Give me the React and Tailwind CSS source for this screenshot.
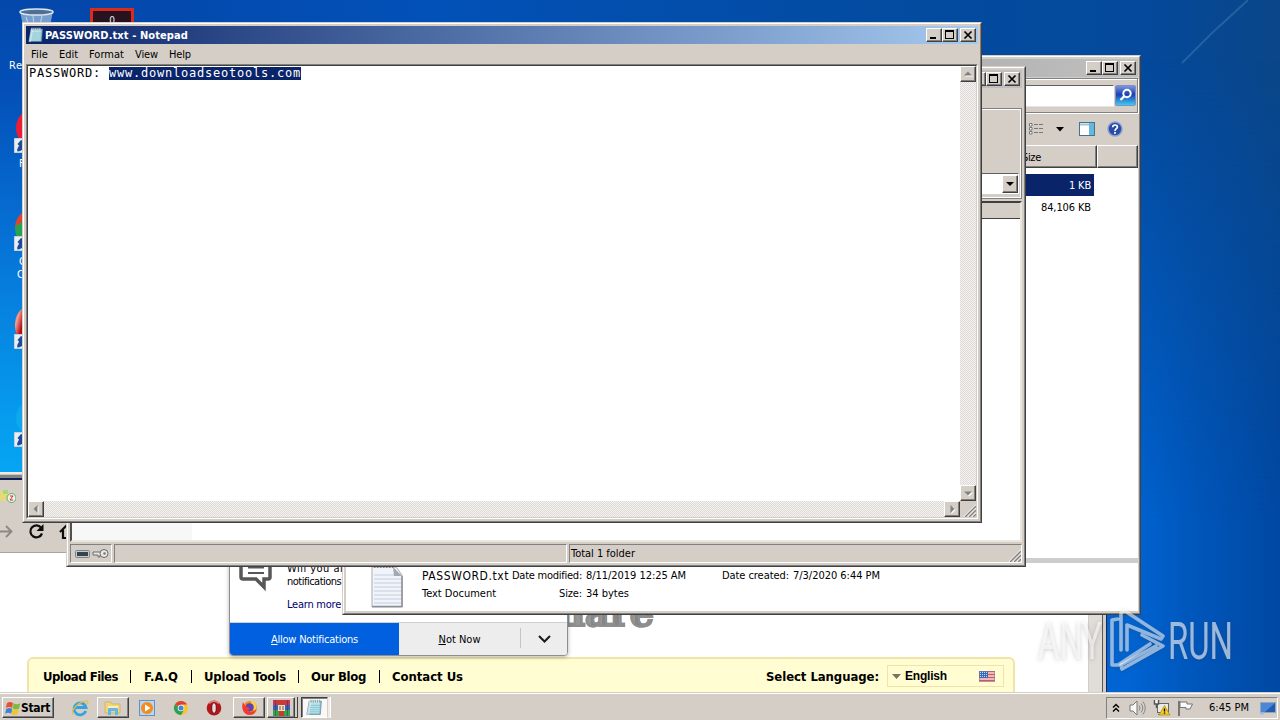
import React, { useLayoutEffect, useRef } from "react";

const UI = "font-['DejaVu_Sans_Condensed','DejaVu_Sans',sans-serif] ";

/* One line of text, tracked so that it fills the given width. */
function T({ w, className = "", children }) {
  const ref = useRef(null);
  useLayoutEffect(() => {
    const el = ref.current;
    el.style.letterSpacing = "0px";
    const n = el.textContent.length;
    el.style.letterSpacing = (w - el.getBoundingClientRect().width) / n + "px";
  }, [w]);
  return (
    <span ref={ref} className={"inline-block shrink-0 whitespace-pre " + className}>
      {children}
    </span>
  );
}

const RAISED =
  "border border-t-white border-l-white border-r-[#404040] border-b-[#404040] shadow-[inset_-1px_-1px_0_#808080] bg-[#d5cec7] ";

function Win({ className, pad = "p-[2px]", children }) {
  return (
    <div className={"absolute border border-t-[#d4d0c8] border-l-[#d4d0c8] border-r-[#404040] border-b-[#404040] " + className}>
      <div className={"flex h-full w-full flex-col border border-t-white border-l-white border-r-[#808080] border-b-[#808080] bg-[#d5cec7] " + pad}>
        {children}
      </div>
    </div>
  );
}

function Caption() {
  return (
    <div className="flex shrink-0 pt-[2px] pr-[2px]">
      <div className={RAISED + "h-[14px] w-4"}>
        <svg className="block" width="14" height="12"><rect x="3" y="8" width="6" height="2" fill="#000" /></svg>
      </div>
      <div className={RAISED + "h-[14px] w-4"}>
        <svg className="block" width="14" height="12"><path d="M2 1h9v9H2zM3 3v6h7V3z" fillRule="evenodd" fill="#000" /></svg>
      </div>
      <div className={RAISED + "ml-[2px] h-[14px] w-4"}>
        <svg className="block" width="14" height="12"><path d="M3.500 2.500l7 7M10.500 2.500l-7 7" stroke="#000" strokeWidth="1.700" /></svg>
      </div>
    </div>
  );
}

function ScrollBtn({ d }) {
  return (
    <div className={RAISED + "h-4 w-4 shrink-0"}>
      <svg className="block" width="14" height="14">
        <path d={d} fill="#fff" transform="translate(1 1)" />
        <path d={d} fill="#808080" />
      </svg>
    </div>
  );
}

const DITHER = "bg-[#e9e7e3] bg-[conic-gradient(#f4f3f1_25%,#dedad5_0_50%,#f4f3f1_0_75%,#dedad5_0)] bg-[length:2px_2px] ";

function Grip() {
  return (
    <svg className="block" width="13" height="13">
      <path d="M1 13L13 1M5 13L13 5M9 13L13 9" stroke="#fff" strokeWidth="1.200" />
      <path d="M2 13L13 2M6 13L13 6M10 13L13 10" stroke="#808080" strokeWidth="1.300" />
    </svg>
  );
}

function NotepadIcon({ size = 16 }) {
  return (
    <svg className="block shrink-0" width={size} height={size} viewBox="0 0 16 16">
      <path d="M3 2h11.500l-1 12.500H.8z" fill="#8fc3cf" stroke="#4f7f90" strokeWidth=".6" />
      <path d="M4 3.500h9l-.8 10H2.500z" fill="#b5e3ea" />
      <path d="M4 6h9M3.700 8h9M3.400 10h9M3 12h9" stroke="#7db6c4" strokeWidth=".6" />
      <path d="M4 .7v2.500M6 .7v2.500M8 .7v2.500M10 .7v2.500M12 .7v2.500" stroke="#e8f0f2" strokeWidth="1.100" />
      <path d="M4.600 .7v2M6.600 .7v2M8.600 .7v2M10.600 .7v2M12.600 .7v2" stroke="#5b6a70" strokeWidth=".5" />
      <path d="M3 2L.8 14.500l2 .8L5 3z" fill="#e8f2f4" opacity=".6" />
    </svg>
  );
}

function Shortcut({ className }) {
  return (
    <svg className={"absolute left-[14px] " + className} width="15" height="15" viewBox="0 0 15 15">
      <rect width="15" height="15" fill="#e9eef3" stroke="#9fb4c8" />
      <path d="M3.500 13.500c-1-3 1-4 1.500-6L3.500 6l3.500-4 6 3-3 1.500c.5 4-1.500 6.500-6.500 7z" fill="#1c4b9c" />
    </svg>
  );
}

function ChromeIcon({ s }) {
  return (
    <svg className="block" width={s} height={s} viewBox="0 0 16 16">
      <circle cx="8" cy="8" r="7" fill="#f7c52b" />
      <path d="M8 8L1.900 4.500A7 7 0 0 1 14.100 4.500H8z" fill="#de4032" />
      <path d="M8 8L1.900 4.500A7 7 0 0 0 8 15l3-5z" fill="#2da152" />
      <circle cx="8" cy="8" r="3.300" fill="#f4f4f0" />
      <circle cx="8" cy="8" r="2.500" fill="#4285d8" />
    </svg>
  );
}

function Desktop() {
  return (
    <>
      <div className="absolute inset-0 bg-[linear-gradient(180deg,#0447aa_0px,#0350b8_90px,#0672d6_240px,#069cee_420px,#06a6f4_480px)]" />
      <div className="absolute inset-y-0 left-[80px] right-0 bg-[linear-gradient(90deg,#0447aa_0px,#0251b8_350px,#034b9f_840px,#04499c_1060px,#0a4688_1200px)]" />
      <div className="absolute bottom-0 left-[1040px] right-0 top-[60px] bg-[linear-gradient(90deg,#0064d2_90px,#0055b9_160px,#0048a2_240px)] [mask-image:linear-gradient(180deg,transparent_0px,black_460px)]" />
      <svg className="absolute right-0 top-0" width="120" height="80">
        <path d="M88 0L52 33L22 63" stroke="#5d8fbd" strokeWidth="2" opacity=".35" fill="none" />
      </svg>
      <svg className="absolute left-[18px] top-[8px]" width="38" height="18">
        <path d="M2 3h33l-3 15H5z" fill="#9dbbd8" opacity=".75" />
        <ellipse cx="18.500" cy="4" rx="16.500" ry="3" fill="#4f6f96" stroke="#dbe6ee" strokeWidth="1.500" />
        <path d="M8 9l3 9M15 8l1 9M24 8l-2 9" stroke="#dceaf5" strokeWidth="1.200" opacity=".6" />
      </svg>
      <div className={UI + "absolute left-[90px] top-[8px] h-[24px] w-[44px] border-[3px] border-[#dc2a1c] bg-[#26131f] text-center text-[10px] leading-[20px] text-[#eee]"}>0</div>
      <div className={UI + "absolute left-[9px] top-[60px] text-[11px] leading-3 text-white"}><T w={64}>Recycle Bin</T></div>
      <div className="absolute left-[16px] top-[108px] h-[40px] w-[40px] rounded-full bg-[#ee1c34]" />
      <Shortcut className="top-[138px]" />
      <div className={UI + "absolute left-[19px] top-[158px] text-[11px] leading-3 text-white"}>F</div>
      <div className="absolute left-[15px] top-[208px] h-[40px] w-[40px] rounded-full bg-[linear-gradient(150deg,#e0442e_28%,#2ba24e_30%)]" />
      <Shortcut className="top-[236px]" />
      <div className={UI + "absolute left-[19px] top-[256px] text-[11px] leading-3 text-white"}>G</div>
      <div className={UI + "absolute left-[17px] top-[269px] text-[11px] leading-3 text-white"}>C</div>
      <div className="absolute left-[15px] top-[304px] h-[42px] w-[40px] rounded-full bg-[linear-gradient(105deg,#d8281e_0%,#f3a096_12%,#b80c10_25%)]" />
      <Shortcut className="top-[334px]" />
      <div className="absolute left-[16px] top-[400px] h-[36px] w-[36px] rounded-full bg-[#13b0ee] opacity-60" />
      <Shortcut className="top-[432px]" />
    </>
  );
}

function Browser() {
  return (
    <div className="absolute left-0 top-[472px] flex h-[221px] w-[1107px] flex-col overflow-hidden border-r border-[#10285c] bg-white">
      <div className="h-[2px] shrink-0 bg-[#eceae6]" />
      <div className="h-px shrink-0 bg-[#cbc6bf]" />
      <div className="h-[3px] shrink-0 bg-[#858380]" />
      <div className="h-[2px] shrink-0 bg-[#0c1f58]" />
      <div className="flex h-[73px] shrink-0 flex-col border-b border-[#aaa5a0] bg-[#d5cec7]">
        <svg className="mt-[9px] block shrink-0" width="16" height="16">
          <path d="M0 2h6l2 2h6v8H0z" fill="#e7d87b" />
          <path d="M3 1h5v4H3z" fill="#a6d67b" />
          <circle cx="11.500" cy="9" r="4.500" fill="#f2efeb" stroke="#52ad76" />
          <path d="M10 7h3l-3 4h3" stroke="#cb3028" fill="none" />
        </svg>
        <svg className="mt-[16px] block shrink-0" width="80" height="22">
          <path d="M0 10.500h11M6 5l5.500 5.500L6 16" stroke="#8b8783" strokeWidth="1.800" fill="none" />
          <path d="M41 6.500A6 6 0 1 0 42 12.500" stroke="#0c0c0d" strokeWidth="2.200" fill="none" />
          <path d="M43.500 3v7h-7z" fill="#0c0c0d" />
          <path d="M60 11l7-7 7 7M63 9v8h9V9" stroke="#0c0c0d" strokeWidth="2.200" fill="none" />
        </svg>
      </div>
      <div className="flex min-h-0 grow">
        <div className="relative grow overflow-hidden">
          <div className="absolute left-[536px] top-[38px] bg-[repeating-linear-gradient(90deg,#858585_0_6px,#969696_6px_11px)] bg-clip-text font-['DejaVu_Serif',serif] text-[38px] font-black leading-[44px] text-transparent [-webkit-text-stroke:2px_#8e8e8e]">
            <T w={118}>share</T>
          </div>
          <div className="mt-[104px] flex px-[27px]">
            <div className={UI + "flex h-[50px] w-[988px] items-start rounded-t-[6px] border-2 border-[#f1e4a9] bg-[#fffdd1] pl-[14px] text-[13px] font-bold leading-[16px] text-black"}>
              <div className="flex pt-[10px]">
                <T w={75}>Upload Files</T>
                <div className="ml-[12px] mt-px h-[13px] w-px bg-black" />
                <T w={34} className="ml-[13px]">F.A.Q</T>
                <div className="ml-[13px] mt-px h-[13px] w-px bg-black" />
                <T w={82} className="ml-[12px]">Upload Tools</T>
                <div className="ml-[12px] mt-px h-[13px] w-px bg-black" />
                <T w={55} className="ml-[12px]">Our Blog</T>
                <div className="ml-[13px] mt-px h-[13px] w-px bg-black" />
                <T w={71} className="ml-[12px]">Contact Us</T>
              </div>
              <T w={113} className="ml-[303px] mt-[10px]">Select Language:</T>
              <div className="ml-[8px] mt-[6px] flex h-[22px] w-[117px] items-center border border-[#f1e4a9] pl-[4px]">
                <svg width="9" height="5"><path d="M0 0h9L4.500 5z" fill="#77755f" /></svg>
                <span className="ml-[4px] font-['Liberation_Sans',sans-serif] text-[12px]"><T w={42}>English</T></span>
                <svg className="ml-[32px]" width="16" height="11">
                  <rect width="16" height="11" fill="#f3dcd8" />
                  <path d="M0 .5h16M0 3.500h16M0 6.500h16M0 9.500h16" stroke="#d0575a" strokeWidth="1.300" />
                  <rect width="9" height="7" fill="#3667b8" />
                  <path d="M1 1.500h7M1 3.500h7M1 5.500h7" stroke="#c6d7ee" strokeDasharray="1 1" />
                  <rect x=".5" y=".5" width="15" height="10" fill="none" stroke="#8d7894" strokeOpacity=".6" />
                </svg>
              </div>
            </div>
          </div>
        </div>
        <div className="w-[14px] shrink-0 border-l border-[#d2cec9] bg-[#e0dcd8]" />
        <div className="w-px shrink-0 bg-[#5a5754]" />
        <div className="w-[3px] shrink-0 bg-[#d5cec7]" />
      </div>
    </div>
  );
}

function Popup() {
  return (
    <div className={UI + "absolute left-[229px] top-[540px] flex h-[116px] w-[339px] flex-col overflow-hidden rounded-b-[4px] border border-[#8e8e8e] bg-white text-[11px] leading-[13px] shadow-[0_1px_4px_rgba(0,0,0,.3)]"}>
      <div className="flex grow">
        <svg className="ml-[9px] mt-[9px] block shrink-0" width="34" height="42">
          <path d="M4 3h25q2 0 2 2v22q0 2-2 2h-4v8l-8-8H4q-2 0-2-2V5q0-2 2-2z" fill="#fff" stroke="#58585a" strokeWidth="3.500" />
          <path d="M9 12h16M9 17.500h16M9 23h16" stroke="#58585a" strokeWidth="2" />
        </svg>
        <div className="ml-[14px] flex flex-col items-start pt-[21px]">
          <T w={165}>Will you allow this site to send</T>
          <T w={59}>notifications?</T>
          <T w={54} className="mt-[10px] text-[#000070]">Learn more</T>
        </div>
      </div>
      <div className="flex h-[33px] shrink-0 border-t border-[#cfcfcf] bg-[#ededed]">
        <div className="flex w-[169px] justify-center bg-[#0060df] pt-[10px] text-white">
          <T w={87}><u>A</u>llow Notifications</T>
        </div>
        <div className="flex w-[121px] justify-center pt-[10px] text-black"><T w={42}><u>N</u>ot Now</T></div>
        <div className="mt-[5px] h-[20px] w-px bg-[#c4c4c4]" />
        <svg className="ml-[16px] mt-[10px]" width="15" height="12"><path d="M2 3l5.500 5.500L13 3" fill="none" stroke="#1a1a1a" strokeWidth="2" /></svg>
      </div>
    </div>
  );
}

function Explorer() {
  return (
    <Win className="left-[342px] top-[55px] h-[560px] w-[799px]" pad="py-[2px] pl-[2px] pr-px">
      <div className="flex h-[18px] shrink-0 justify-end bg-[linear-gradient(90deg,#808080,#c0c0c0)]"><Caption /></div>
      <div className="mt-px flex h-[35px] shrink-0 justify-end border border-[#808080] pt-[6px] pr-px shadow-[inset_1px_1px_0_#fff,1px_1px_0_#fff]">
        <div className="h-[22px] w-[300px] border border-t-[#606060] border-l-[#606060] border-r-white border-b-[#e8e5e0] bg-white" />
        <svg className="ml-px block" width="21" height="21">
          <defs><linearGradient id="sg" x1="0" y1="0" x2="0" y2="1"><stop offset="0" stopColor="#7f9be0" /><stop offset=".45" stopColor="#1d3fb4" /><stop offset="1" stopColor="#3fd2f4" /></linearGradient></defs>
          <rect x=".5" y=".5" width="20" height="20" rx="1.500" fill="url(#sg)" stroke="#8090c4" />
          <circle cx="12" cy="8.500" r="3.700" fill="none" stroke="#fff" strokeWidth="2" />
          <path d="M9.500 11l-4 4" stroke="#fff" strokeWidth="2.400" />
        </svg>
      </div>
      <div className="flex h-[32px] shrink-0 items-center justify-end pr-[15px]">
        <svg className="block" width="16" height="14">
          <path d="M1.500 1.500h2.500v2.500H1.500zM1.500 5.500h2.500v2.500H1.500zM1.500 9.500h2.500v2.500H1.500z" fill="#fff" stroke="#777" />
          <path d="M6 2.500h9M6 6.500h9M6 10.500h9" stroke="#777" strokeDasharray="4 1" />
        </svg>
        <svg className="ml-[12px] block" width="8" height="5"><path d="M0 0h8L4 4.500z" fill="#000" /></svg>
        <svg className="ml-[15px] block" width="16" height="14">
          <rect x=".5" y=".5" width="15" height="13" fill="#fff" stroke="#4a7186" />
          <path d="M1 2.500h14" stroke="#9dc6d8" strokeWidth="2" />
          <rect x="10" y="1" width="5" height="12" fill="#63b9dd" />
        </svg>
        <svg className="ml-[12px] block" width="16" height="16">
          <circle cx="8" cy="8" r="7" fill="#294ca6" stroke="#8ba1d0" strokeWidth="1.500" />
          <path d="M5.700 6.300c0-3 4.800-3 4.700-.3C10.400 7.700 8 7.800 8 10" stroke="#fff" strokeWidth="1.700" fill="none" />
          <rect x="7.100" y="11" width="1.800" height="1.800" fill="#fff" />
        </svg>
      </div>
      <div className={UI + "flex h-[23px] shrink-0 text-[11px] leading-[13px]"}>
        <div className={RAISED + "w-[751px] pl-[675px] pt-[5px]"}><T w={19}>Size</T></div>
        <div className={RAISED + "grow"} />
      </div>
      <div className={UI + "flex grow flex-col bg-white pt-[6px] text-[11px] leading-[24px]"}>
        <div className="flex h-[22px] w-[748px] justify-end bg-[#0a246a] pr-[3px] text-white"><T w={22}>1 KB</T></div>
        <div className="flex h-[22px] w-[748px] justify-end pr-[3px]"><T w={50}>84,106 KB</T></div>
      </div>
      <div className="h-[5px] shrink-0 bg-[#cdcdcb]" />
      <div className={UI + "flex h-[48px] shrink-0 bg-white pl-[25px] text-[11px] leading-[14px]"}>
        <svg className="block shrink-0" width="32" height="46" viewBox="0 0 32 46">
          <path d="M1 4h24l6 8v32H1z" fill="#f1f4f9" stroke="#a9adb5" />
          <path d="M3 12h27M3 16h27M3 20h27M3 24h27M3 28h27M3 32h27M3 36h27M3 40h27" stroke="#c3cde0" />
          <path d="M22 4l9 9h-8z" fill="#a4a9b0" />
          <path d="M3 4h20" stroke="#888" strokeWidth="2" strokeDasharray="1.500 1.500" />
          <path d="M1 43.500h30V13" stroke="#8d9097" fill="none" strokeWidth="1.500" />
        </svg>
        <div className="ml-[19px] flex flex-col pt-[6px]">
          <div className="flex h-[18px]">
            <T w={87} className="text-[12px]">PASSWORD.txt</T>
            <T w={70} className="ml-[3px]">Date modified:</T>
            <T w={100} className="ml-[4px]">8/11/2019 12:25 AM</T>
            <T w={67} className="ml-[36px]">Date created:</T>
            <T w={87} className="ml-[4px]">7/3/2020 6:44 PM</T>
          </div>
          <div className="flex h-[18px]">
            <T w={74}>Text Document</T>
            <T w={23} className="ml-[63px]">Size:</T>
            <T w={43} className="ml-[4px]">34 bytes</T>
          </div>
        </div>
      </div>
    </Win>
  );
}

const SUNK = "border border-t-[#808080] border-l-[#808080] border-r-white border-b-white ";

function Archive() {
  return (
    <Win className="left-[66px] top-[66px] h-[501px] w-[960px]">
      <div className="flex h-[18px] shrink-0 justify-end bg-[linear-gradient(90deg,#808080,#c0c0c0)]"><Caption /></div>
      <div className="h-[20px] shrink-0" />
      <div className="flex h-[91px] shrink-0 flex-col justify-end border border-[#808080] shadow-[inset_1px_1px_0_#fff,inset_-1px_-1px_0_#fff]">
        <div className="mb-[4px] mr-[2px] flex h-[21px] border border-t-[#606060] border-l-[#606060] border-r-white border-b-white bg-white">
          <div className="grow" />
          <div className={RAISED + "mt-px flex h-[18px] w-[16px] items-center justify-center"}>
            <svg width="8" height="4"><path d="M0 0h8L4 4z" fill="#000" /></svg>
          </div>
        </div>
      </div>
      <div className="mt-[2px] flex grow flex-col border-2 border-t-[#404040] border-l-[#505050] border-r-[#e9e6e0] border-b-[#e9e6e0] bg-white">
        <div className="h-[16px] shrink-0 border-b border-[#404040] bg-[#d5cec7]" />
        <div className="w-[120px] grow bg-[#f7f7f7]" />
      </div>
      <div className={UI + "mt-[2px] flex h-[19px] shrink-0 gap-[2px] text-[11px] leading-[18px]"}>
        <div className={SUNK + "flex w-[42px] items-center gap-[2px] pl-[4px]"}>
          <svg width="15" height="8"><rect x=".5" y=".5" width="14" height="7" rx="1" fill="#c3c9ce" stroke="#7b858c" /><rect x="2" y="2" width="11" height="4" fill="#37424b" /></svg>
          <svg width="17" height="11"><path d="M1 4h9v3H8v2H6V7H1z" fill="#e9e9e9" stroke="#6a6a6a" /><circle cx="12" cy="5.500" r="4" fill="#e9e9e9" stroke="#6a6a6a" /><circle cx="12.500" cy="5.500" r="1.300" fill="#777" /></svg>
        </div>
        <div className={SUNK + "w-[453px]"} />
        <div className={SUNK + "flex grow justify-between pl-px"}>
          <T w={64}>Total 1 folder</T>
          <div className="pt-[4px]"><Grip /></div>
        </div>
      </div>
    </Win>
  );
}

function Notepad() {
  return (
    <Win className="left-[22px] top-[22px] h-[501px] w-[960px]">
      <div className={UI + "flex h-[18px] shrink-0 bg-[linear-gradient(90deg,#0a246a,#a6caf0)] pl-[2px]"}>
        <div className="pt-px"><NotepadIcon /></div>
        <T w={143} className="ml-px text-[11px] font-bold leading-[19px] text-white">PASSWORD.txt - Notepad</T>
        <div className="grow" />
        <Caption />
      </div>
      <div className={UI + "flex h-[20px] shrink-0 pl-[5px] text-[11px] leading-[22px] text-black"}>
        <T w={17}>File</T>
        <T w={19} className="ml-[11px]">Edit</T>
        <T w={35} className="ml-[11px]">Format</T>
        <T w={23} className="ml-[11px]">View</T>
        <T w={22} className="ml-[11px]">Help</T>
      </div>
      <div className="flex grow flex-col border border-t-[#808080] border-l-[#808080] border-r-white border-b-white">
        <div className="flex grow flex-col border border-t-[#404040] border-l-[#404040] border-r-[#d5cec7] border-b-[#d5cec7] bg-white">
          <div className="flex grow">
            <div className="flex grow items-start pl-px pt-px font-['DejaVu_Sans_Mono',monospace] text-[12px] leading-[13px] text-black">
              <T w={80}>{"PASSWORD: "}</T>
              <span className="h-[13px] bg-[#0a246a] text-white"><T w={192}>www.downloadseotools.com</T></span>
            </div>
            <div className={DITHER + "flex w-4 flex-col justify-between"}>
              <ScrollBtn d="M3 8.500h8l-4-4z" />
              <ScrollBtn d="M3 5.500h8l-4 4z" />
            </div>
          </div>
          <div className="flex h-4 shrink-0">
            <div className={DITHER + "flex grow justify-between"}>
              <ScrollBtn d="M8.500 3v8l-4-4z" />
              <ScrollBtn d="M5.500 3v8l4-4z" />
            </div>
            <div className="w-4 bg-[#d5cec7] pl-[3px] pt-[3px]"><Grip /></div>
          </div>
        </div>
      </div>
    </Win>
  );
}

function Taskbar() {
  return (
    <div className="absolute inset-x-0 bottom-0 flex h-[28px] items-start border-t border-[#d5cec7] bg-[#d5cec7] pl-[2px] shadow-[inset_0_1px_0_#fff]">
      <div className={RAISED + UI + "mt-[4px] flex h-[21px] w-[52px] items-center pl-[2px] text-[12px] font-bold text-black"}>
        <svg className="block shrink-0" width="16" height="16" viewBox="0 0 16 16">
          <path d="M2 3q3-2 6 0L7 8Q4 6 .8 8z" fill="#e5532b" />
          <path d="M8.700 3.300q3 2 6.500 0L14 8.500q-3 2-6.300 0z" fill="#7cba3c" />
          <path d="M.6 9q3-2 6 0l-1 4.700q-3-2-6 0z" fill="#3f83d6" transform="translate(.6 0)" />
          <path d="M7.500 9.300q3 2 6.300 0l-1.200 4.600q-3 2-6.300 0z" fill="#f4c32d" />
        </svg>
        <T w={29}>Start</T>
      </div>
      <svg className="ml-[17px] mt-[6px] block" width="18" height="18" viewBox="0 0 18 18">
        <path d="M14.800 12A6 6 0 1 1 15 8.500H4.500" stroke="#38a2dc" strokeWidth="2.800" fill="none" />
        <path d="M2 15.500C-1 12 8 2 15.500 1.800c2 .2 1.300 2.200.5 3.500" stroke="#e8bd45" strokeWidth="1.300" fill="none" />
      </svg>
      <div className={RAISED + "ml-[8px] mt-[4px] flex h-[21px] w-[32px] items-center justify-center"}>
        <svg className="block" width="18" height="16"><path d="M1 2h6l1 2h8v9H1z" fill="#f1d578" stroke="#c7a64d" strokeWidth=".6" /><path d="M4 6h10v4H4z" fill="#f9efbd" /><path d="M4 15V9q0-1 1-1h8q1 0 1 1v6h-3v-4H7v4z" fill="#64b7e0" /></svg>
      </div>
      <svg className="ml-[10px] mt-[7px] block" width="16" height="16"><rect x=".5" y=".5" width="15" height="15" fill="#b8d4ee" stroke="#5f93c7" /><circle cx="8" cy="8" r="6" fill="#f28c1e" /><path d="M6 4.500l5.500 3.500L6 11.500z" fill="#fff" /></svg>
      <div className="ml-[18px] mt-[7px]"><ChromeIcon s={16} /></div>
      <svg className="ml-[17px] mt-[7px] block" width="16" height="16"><ellipse cx="8" cy="8" rx="7.300" ry="7.500" fill="#b3161b" /><path d="M3 3.500Q8-1 13 3.500" stroke="#e58680" strokeWidth="1.500" fill="none" /><ellipse cx="8" cy="8" rx="2.300" ry="5.300" fill="#e9dcd8" stroke="#6d0a0e" /></svg>
      <div className={RAISED + "ml-[11px] mt-[4px] flex h-[21px] w-[32px] items-center justify-center"}>
        <svg className="block" width="17" height="17" viewBox="0 0 17 17"><circle cx="9" cy="9" r="7" fill="#f58a20" /><path d="M10 1c5 2 7 7 4 11l-4-3z" fill="#ffd042" /><circle cx="8.700" cy="8.300" r="4" fill="#5a44b8" /><path d="M2 3c-2 6 0 12 6 13 5 0 7-3 7-6-2 3-6 4-8 1 2 0 2-2 0-3-2 0-4-2-5-5z" fill="#f03a36" /></svg>
      </div>
      <div className={RAISED + "ml-[2px] mt-[4px] flex h-[21px] w-[28px] items-center justify-center"}>
        <svg className="block" width="17" height="16"><rect y="0" width="17" height="5" fill="#c8374f" /><rect y="5" width="17" height="5" fill="#3b5fb8" /><rect y="10" width="17" height="6" fill="#38a052" /><rect x="6" width="5" height="16" fill="#c93b2a" /><rect x="5" y="5" width="7" height="6" fill="#e9dfcb" /><path d="M7 6v4M10 6v4" stroke="#705c3c" /><path d="M2.500 0v16M14.500 0v16" stroke="#181818" strokeOpacity=".3" /></svg>
      </div>
      <div className="mt-[4px] h-[21px] w-[3px] border-b border-r border-[#404040]" />
      <div className="ml-[3px] mt-[4px] flex h-[21px] w-[27px] items-center justify-center border border-t-[#404040] border-l-[#404040] border-r-[#d5cec7] border-b-white bg-[#f9f8f7] shadow-[inset_1px_1px_0_#808080]"><NotepadIcon size={17} /></div>
      <div className="mt-[4px] h-[21px] w-[3px] border-r border-[#fff] bg-[#eeebe8]" />
      <div className="grow" />
      <div className={SUNK + UI + "mr-[2px] mt-[4px] flex h-[22px] w-[172px] items-center text-[11px] text-black"}>
        <svg className="ml-[5px] block" width="8" height="10"><path d="M1 4.500L4 1.500l3 3M1 8.500l3-3 3 3" stroke="#000" strokeWidth="1.400" fill="none" /></svg>
        <svg className="ml-[9px] block" width="17" height="16"><path d="M1 5h3l4-4v14l-4-4H1z" fill="#f8f8f8" stroke="#777" /><path d="M10 5.500q2 2.500 0 5M12 3.500q3.500 4.500 0 9M14 1.500q4.500 6.500 0 13" stroke="#888" fill="none" /></svg>
        <svg className="ml-[7px] block" width="18" height="16"><rect x="4.500" y="3.500" width="11" height="9" fill="#ece9e4" stroke="#666" /><path d="M1.500 0v4h4V0M3.500 4v4" stroke="#555" strokeWidth="1.500" fill="#fff" /><path d="M5 14.500h6" stroke="#666" /><path d="M11.500 5.500L17 15H6z" fill="#f3ca20" stroke="#a68715" strokeWidth=".7" /><path d="M11.500 8.500v3M11.500 12.500v1.200" stroke="#000" strokeWidth="1.300" /></svg>
        <svg className="ml-[6px] block" width="17" height="16"><path d="M2 1v15" stroke="#666" strokeWidth="1.700" /><path d="M3 2h7v2h5.500L13 9H9V7.500H3z" fill="#fafafa" stroke="#777" /></svg>
        <T w={40} className="ml-[15px]">6:45 PM</T>
        <svg className="ml-[11px] block" width="17" height="14"><rect x=".5" y="1.500" width="15" height="10" fill="#2459b0" stroke="#8fa5c0" /><path d="M1 2h14L5 11H1z" fill="#4c87d6" /><path d="M0 12.500h4" stroke="#9fc0e0" strokeWidth="2" /></svg>
      </div>
    </div>
  );
}

function Watermark() {
  return (
    <svg className="pointer-events-none absolute left-[1030px] top-[596px] overflow-visible drop-shadow-[0_1px_2px_rgba(60,60,60,.4)]" width="240" height="90">
      <g fill="#fff" fillOpacity=".6" fontFamily="Roboto, sans-serif" fontSize="51">
        <text x="8" y="63" textLength="64" lengthAdjust="spacingAndGlyphs">ANY</text>
        <text x="138" y="63" textLength="65" lengthAdjust="spacingAndGlyphs">RUN</text>
      </g>
      <g fill="none" stroke="#fff" strokeOpacity=".55" strokeWidth="3.600" strokeLinejoin="round" strokeLinecap="round">
        <path d="M88 23L82 24V69L88 69L120 48" />
        <path d="M91 54V17L95 15L133 40L131 43L97 29V54" />
        <path d="M112 39L133 50L92 73L91 69L126 50" />
      </g>
    </svg>
  );
}

export default function App() {
  return (
    <div className="relative h-[720px] w-[1280px] overflow-hidden bg-[#0450b0]">
      <Desktop />
      <Browser />
      <Popup />
      <Explorer />
      <Archive />
      <Notepad />
      <Taskbar />
      <Watermark />
    </div>
  );
}
